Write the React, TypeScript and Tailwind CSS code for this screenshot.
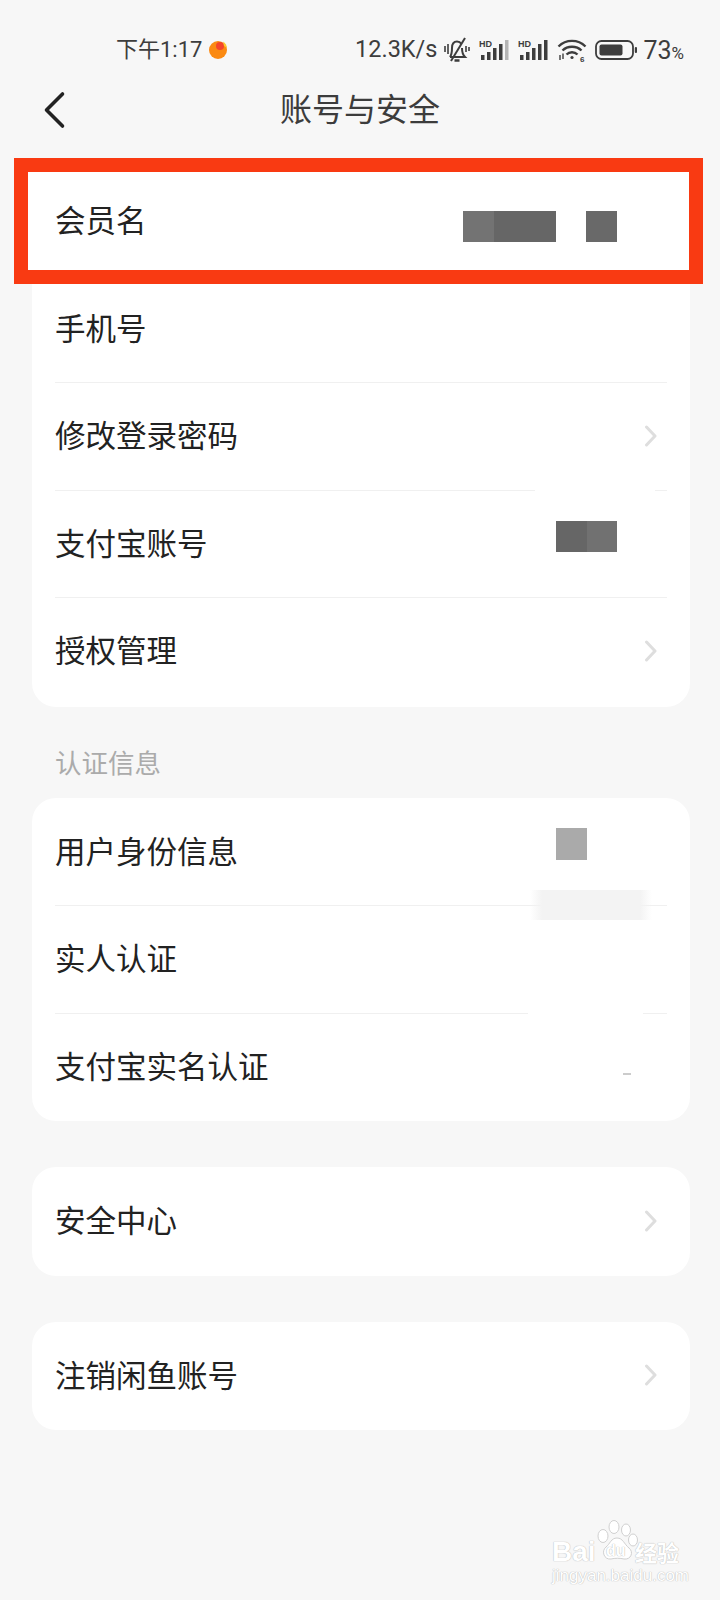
import React from 'react';

const cjk = "font-['Noto_Sans_CJK_SC','Noto_Sans',sans-serif]";

function Chevron() {
  return (
    <svg width="14" height="22" viewBox="0 0 14 22" fill="none" className="shrink-0">
      <path d="M2.5 2 L11 11 L2.5 20" stroke="#dedede" strokeWidth="3" strokeLinecap="round" strokeLinejoin="round" />
    </svg>
  );
}

function Mosaic({ className }: { className: string }) {
  return <div className={className} />;
}

function Row({ label, children, chevron }: { label: string; children?: React.ReactNode; chevron?: boolean }) {
  return (
    <div className="relative z-10 flex h-[107.5px] items-center pl-[23px] pr-[32px]">
      <span className="mb-[3px] text-[30.5px] leading-none text-[#222222]">{label}</span>
      <div className="ml-auto flex items-center">
        {children}
        {chevron && <Chevron />}
      </div>
    </div>
  );
}

function Divider({ gapFrom, gapWidth }: { gapFrom?: number; gapWidth?: number }) {
  if (gapFrom === undefined) {
    return <div className="mx-[23px] -mb-px h-px bg-[#f0f0f0]" />;
  }
  return (
    <div className="mx-[23px] -mb-px flex h-px">
      <div className="bg-[#f0f0f0]" style={{ width: gapFrom }} />
      <div style={{ width: gapWidth }} />
      <div className="flex-1 bg-[#f0f0f0]" />
    </div>
  );
}

function Card({ children, className = '' }: { children: React.ReactNode; className?: string }) {
  return <div className={`mx-[32px] w-[658px] rounded-[24px] bg-white ${className}`}>{children}</div>;
}

function StatusBar() {
  return (
    <div className="flex h-[84px] items-start pt-[34px] text-[#3d3d3d]">
      <div className="ml-[116px] flex h-[32px] items-center font-['Roboto','Noto_Sans_CJK_SC',sans-serif] text-[22px] leading-none">
        <span>下午1:17</span>
        <svg width="20" height="20" viewBox="0 0 20 20" className="ml-[6px]">
          <circle cx="10" cy="10" r="9" fill="#fb8a12" />
          <circle cx="12" cy="6" r="4" fill="#f4452b" />
          <path d="M15 1.5 A9 9 0 0 1 19 8 L16 6 Z" fill="#fbc92e" />
        </svg>
      </div>
      <div className="ml-auto mr-[36px] flex h-[32px] items-center">
        <span className="font-['Roboto',sans-serif] text-[23.5px] leading-none">12.3K/s</span>
        <svg width="30" height="30" viewBox="0 0 30 30" fill="none" stroke="#3d3d3d" strokeWidth="2" className="ml-[5px]">
          <path d="M8 22 C10 19 10 16 10 13 C10 9 12 6.5 15 6.5 C17 6.5 18.5 7.5 19.5 9" />
          <path d="M20 13 C20 17 21 20 23 22 L8 22" />
          <path d="M12.5 25.5 H17.5" strokeWidth="2.5" />
          <path d="M9 26 L23 3" />
          <path d="M3 11 V17 M6 9 V19 M24 11 V17 M27 12 V16" strokeWidth="1.6" />
        </svg>
        <svg width="32" height="22" viewBox="0 0 32 22" className="ml-[7px]">
          <text x="0" y="7.5" fontSize="9" fontWeight="700" fontFamily="Liberation Sans" fill="#3d3d3d">HD</text>
          <rect x="2" y="16" width="3.5" height="5" fill="#3d3d3d" />
          <rect x="8" y="13" width="3.5" height="8" fill="#3d3d3d" />
          <rect x="14" y="9" width="3.5" height="12" fill="#3d3d3d" />
          <rect x="20" y="5" width="3.5" height="16" fill="#3d3d3d" />
          <rect x="26" y="1" width="3.5" height="20" fill="#b5b5b5" />
        </svg>
        <svg width="32" height="22" viewBox="0 0 32 22" className="ml-[7px]">
          <text x="0" y="7.5" fontSize="9" fontWeight="700" fontFamily="Liberation Sans" fill="#3d3d3d">HD</text>
          <rect x="2" y="16" width="3.5" height="5" fill="#3d3d3d" />
          <rect x="8" y="13" width="3.5" height="8" fill="#3d3d3d" />
          <rect x="14" y="9" width="3.5" height="12" fill="#3d3d3d" />
          <rect x="20" y="5" width="3.5" height="16" fill="#3d3d3d" />
          <rect x="26" y="1" width="3.5" height="20" fill="#3d3d3d" />
        </svg>
        <svg width="30" height="24" viewBox="0 0 30 24" fill="none" stroke="#3d3d3d" strokeWidth="2.4" className="ml-[7px]">
          <path d="M1.5 8.5 C9 1 21 1 28.5 8.5" />
          <path d="M5.5 12.5 C10.5 7.5 19.5 7.5 24.5 12.5" />
          <path d="M9.5 16.5 C12.5 13.5 17.5 13.5 20.5 16.5" />
          <circle cx="15" cy="19.5" r="1.6" fill="#3d3d3d" stroke="none" />
          <path d="M3 17 V22 M6 15.5 V21" strokeWidth="1.4" />
          <text x="23" y="23.5" fontSize="8" fontWeight="700" fontFamily="Liberation Sans" fill="#3d3d3d" stroke="none">6</text>
        </svg>
        <svg width="42" height="20" viewBox="0 0 42 20" fill="none" className="ml-[8px]">
          <rect x="1" y="1" width="37" height="18" rx="5.5" stroke="#3d3d3d" strokeWidth="1.8" />
          <rect x="4.5" y="4.5" width="23" height="11" rx="2" fill="#3d3d3d" />
          <rect x="39.8" y="7" width="2.2" height="6" rx="1" fill="#3d3d3d" />
        </svg>
        <span className="ml-[6px] flex items-baseline font-['Roboto',sans-serif] leading-none">
          <span className="text-[25px]">73</span>
          <span className="text-[17px]">%</span>
        </span>
      </div>
    </div>
  );
}

function Header() {
  return (
    <div className="relative flex h-[83px] items-start justify-center">
      <svg width="24" height="38" viewBox="0 0 24 38" fill="none" className="absolute left-[42px] top-[7px]">
        <path d="M20.5 3 L4.5 19 L20.5 35" stroke="#222222" strokeWidth="3.6" strokeLinecap="round" strokeLinejoin="round" />
      </svg>
      <h1 className="text-[32px] font-normal leading-[47px] text-[#3c3c3c]">账号与安全</h1>
    </div>
  );
}

function Watermark() {
  const glow = "[text-shadow:0_0_1px_#bdbdbd,0_0_1px_#bdbdbd]";
  return (
    <div className="absolute left-[552px] top-[1520px] h-[66px] w-[132px] text-white">
      <svg width="44" height="42" viewBox="0 0 44 42" className="absolute left-[44px] top-0" fill="#ffffff" stroke="#d0d0d0" strokeWidth="1">
        <ellipse cx="7" cy="16" rx="5" ry="6.5" />
        <ellipse cx="18" cy="7" rx="5" ry="6.5" />
        <ellipse cx="30" cy="10" rx="4.5" ry="6" />
        <ellipse cx="37" cy="20" rx="4.5" ry="6" />
        <path d="M21 18 C15 18 14 24 10 27 C5 31 8 40 15 39 C19 38 24 38 28 39 C35 40 38 32 33 28 C28 24 27 18 21 18 Z" />
      </svg>
      <span className={`absolute left-0 top-[17px] font-['Liberation_Sans',sans-serif] text-[28px] font-bold leading-[30px] ${glow}`}>Bai</span>
      <span className={`absolute left-[54px] top-[22px] font-['Liberation_Sans',sans-serif] text-[16px] font-bold leading-[18px] ${glow}`}>du</span>
      <span className={`absolute left-[83px] top-[18px] text-[22px] font-bold leading-[26px] ${glow}`}>经验</span>
      <span className={`absolute left-0 top-[46px] whitespace-nowrap font-['Liberation_Sans',sans-serif] text-[17px] leading-[20px] ${glow}`}>jingyan.baidu.com</span>
    </div>
  );
}

export default function App() {
  return (
    <div className={`relative h-[1600px] w-[720px] overflow-hidden bg-[#f7f7f7] ${cjk}`}>
      <StatusBar />
      <Header />

      <Card className="rounded-t-none pb-[2px]">
        <div className="relative">
          {/* red highlight goes over the first row */}
          <div className="absolute left-[-18px] top-[-9px] h-[126px] w-[689px] border-[14px] border-[#f93a12] bg-white" />
          <Row label="会员名">
            <div className="mr-[41px] mt-[12px] flex">
              <Mosaic className="h-[31px] w-[31px] bg-[#737373]" />
              <Mosaic className="h-[31px] w-[62px] bg-[#666666]" />
              <Mosaic className="ml-[30px] h-[31px] w-[31px] bg-[#696969]" />
            </div>
          </Row>
        </div>
        <Row label="手机号" />
        <Divider />
        <Row label="修改登录密码" chevron />
        <Divider gapFrom={480} gapWidth={120} />
        <Row label="支付宝账号">
          <div className="mb-[14px] mr-[41px] flex">
            <Mosaic className="h-[31px] w-[31px] bg-[#666666]" />
            <Mosaic className="h-[31px] w-[30px] bg-[#717171]" />
          </div>
        </Row>
        <Divider />
        <Row label="授权管理" chevron />
      </Card>

      <div className="flex h-[91px] items-start pl-[55px] pt-[39px]">
        <span className="text-[26.5px] leading-[32px] text-[#ababab]">认证信息</span>
      </div>

      <Card className="pb-px">
        <Row label="用户身份信息">
          <Mosaic className="mb-[14px] mr-[71px] h-[32px] w-[31px] bg-[#aaaaaa]" />
        </Row>
        <div className="relative">
          <Divider />
          <div className="absolute left-[498px] top-[-15px] h-[30px] w-[122px] bg-[linear-gradient(90deg,transparent,#f3f3f3_10%,#f3f3f3_90%,transparent)]" />
        </div>
        <Row label="实人认证" />
        <Divider gapFrom={473} gapWidth={115} />
        <Row label="支付宝实名认证">
          <Mosaic className="mr-[27px] mt-[16px] h-[2px] w-[8px] bg-[#cccccc]" />
        </Row>
      </Card>

      <Card className="mt-[46px] pb-px">
        <Row label="安全中心" chevron />
      </Card>

      <Card className="mt-[46px] pb-px">
        <Row label="注销闲鱼账号" chevron />
      </Card>

      <Watermark />
    </div>
  );
}
